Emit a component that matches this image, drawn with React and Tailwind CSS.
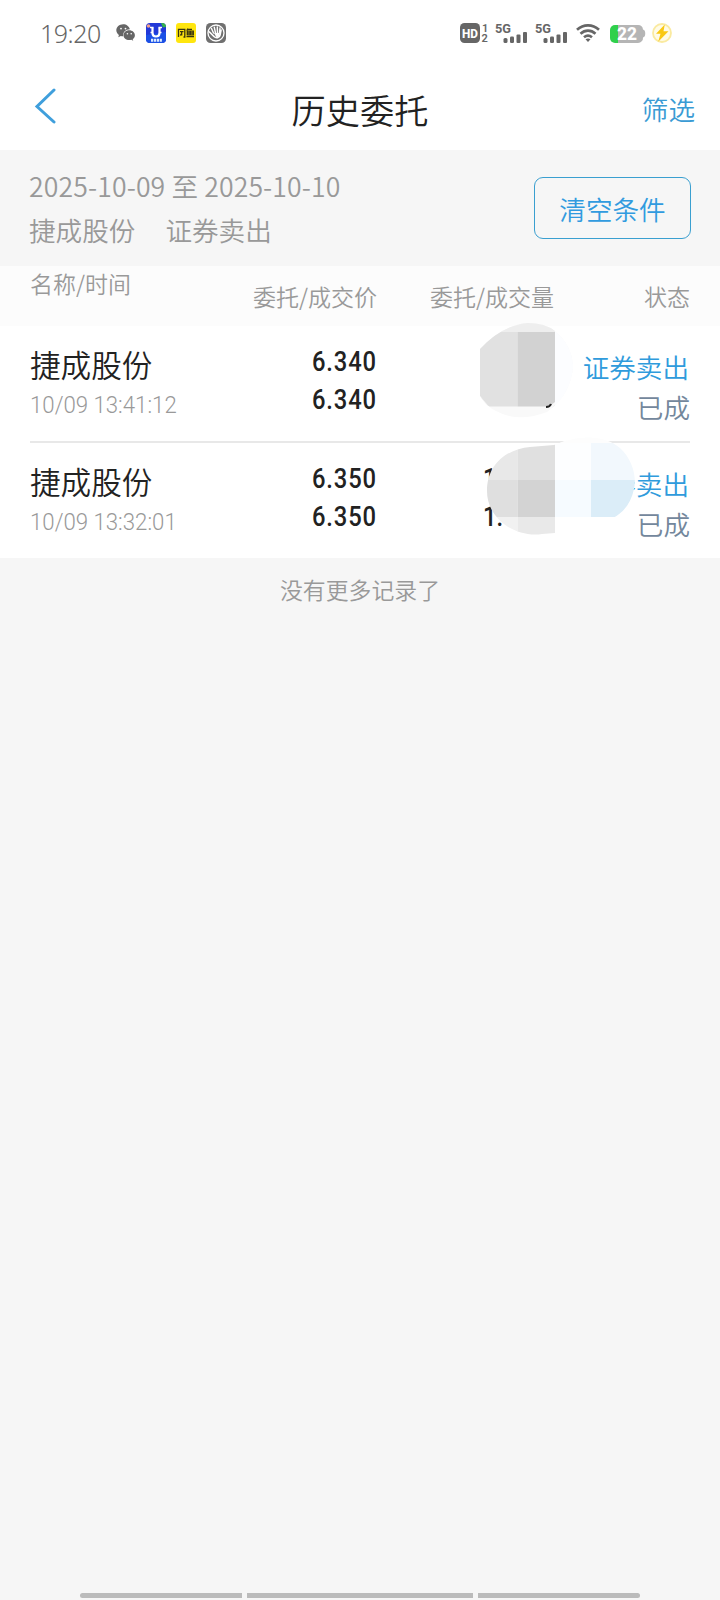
const orders = [
    { name: '捷成股份', time: '10/09 13:41:12', price: '6.340', deal: '6.340', qty: ['', ''], side: '证券卖出', state: '已成' },
    { name: '捷成股份', time: '10/09 13:32:01', price: '6.350', deal: '6.350', qty: ['1', '1.'], side: '证券卖出', state: '已成' },
]

function Signal() {
    return (
        <svg className="mr-2 h-5 w-8 overflow-visible" viewBox="0 0 32 20">
            <text x="-1" y="9.500" fontSize="12.500" fontWeight="700" fontFamily="Roboto, sans-serif" fill="#666" textLength="16" lengthAdjust="spacingAndGlyphs">5G</text>
            <g fill="#666">
                <rect x="7.500" y="15" width="4" height="5" rx="1.500" />
                <rect x="14" y="13.500" width="4" height="6.500" rx="1.200" />
                <rect x="20.500" y="11.500" width="4" height="8.500" rx="1" />
                <rect x="27" y="9" width="4" height="11" rx="1" />
            </g>
        </svg>
    )
}

function StatusBar() {
    return (
        <div className="flex h-[66px] items-center justify-between pl-10 pr-12">
            <div className="flex items-center gap-[10px]">
                <span className="w-[66px] pb-px font-['Noto_Sans',sans-serif] text-[25px] leading-6 tracking-[-0.5px] text-[#666]">19:20</span>
                <svg className="h-5 w-5" viewBox="0 0 20 20">
                    <path d="M7.2 1.2C3.2 1.2.3 4 .3 7.3c0 1.9 1 3.500 2.600 4.600l-.6 2.300 2.500-1.300c.8.3 1.600.4 2.400.4C6.700 9.500 9.500 6.300 13.900 6.300 13.200 3.300 10.500 1.200 7.200 1.200z" fill="#666" />
                    <path d="M13.2 7.300c-3.200 0-5.700 2.200-5.700 4.900s2.500 4.900 5.700 4.900c.7 0 1.400-.1 2.100-.3l1.900 1-.5-1.700c1.400-.9 2.200-2.300 2.200-3.900 0-2.700-2.500-4.900-5.700-4.900z" fill="#666" />
                    <g fill="#fff">
                        <circle cx="5" cy="5.600" r=".9" />
                        <circle cx="9.500" cy="5.600" r=".9" />
                        <circle cx="11.400" cy="10.800" r=".8" />
                        <circle cx="15.200" cy="10.800" r=".8" />
                    </g>
                </svg>
                <svg className="h-5 w-5" viewBox="0 0 20 20">
                    <rect width="20" height="20" rx="4" fill="#2238d8" />
                    <path d="M0 12l20-3v7a4 4 0 0 1-4 4H4a4 4 0 0 1-4-4z" fill="#1b50e6" />
                    <path d="M15 0h1a4 4 0 0 1 4 4l-3 .5z" fill="#35b44a" />
                    <circle cx="2.500" cy="3" r="1.800" fill="#f0a08c" />
                    <path d="M4 4.500h3.500M16 4.500h-3.500" fill="none" stroke="#fff" strokeWidth="1.600" />
                    <path d="M6.500 4.500v5.500q0 3.500 3.500 3.500t3.500-3.500V4.500" fill="none" stroke="#fff" strokeWidth="2.200" />
                    <path d="M4.500 9.500h2M13.500 9.500h2" stroke="#fff" strokeWidth="1.600" />
                    <path d="M5 17.300h11" stroke="#dcecff" strokeWidth="3" strokeDasharray="2.200 .7" />
                </svg>
                <svg className="h-5 w-5" viewBox="0 0 20 20">
                    <rect width="20" height="20" rx="3" fill="#ffe60f" />
                    <g fill="none" stroke="#39350f" strokeWidth="1.300">
                        <path d="M2.500 14V6.300h6.300V14H7.500M4 8.600h3.500M5.700 8.600v4M4.200 12.500l1.400-2" />
                        <path d="M12 5.500l-1.200 2M11.500 6.300h4.500M11.300 8.200h6v3.600h-6zM14.300 8.200v3.600M11.300 10h6M10.500 13.600h7.500" />
                    </g>
                </svg>
                <svg className="h-5 w-5" viewBox="0 0 20 20">
                    <rect width="20" height="20" rx="4.500" fill="#707070" />
                    <circle cx="10" cy="10" r="8" fill="none" stroke="#fff" strokeWidth="1.300" />
                    <path d="M3.500 9l4.500 4.500c2 2 5.500 1.500 6-1.500l1-5" fill="none" stroke="#fff" strokeWidth="1.700" strokeLinecap="round" />
                    <path d="M7.500 10L5.500 5.500M9.500 10L8.300 4.300M11.500 10l-.2-6M13.500 10l.5-5" stroke="#fff" strokeWidth="1.400" strokeLinecap="round" />
                    <path d="M8 10h5.500v3l-3 1.500z" fill="#fff" />
                </svg>
            </div>
            <div className="flex items-center">
                <svg className="mr-[6px] h-5 w-[30px] overflow-visible" viewBox="0 0 30 20">
                    <rect width="20" height="20" rx="4.500" fill="#666" />
                    <text x="2" y="14.800" fontSize="13" fontWeight="800" fontFamily="Roboto, sans-serif" fill="#fff" textLength="16" lengthAdjust="spacingAndGlyphs">HD</text>
                    <g fill="#666" fontFamily="Roboto, sans-serif" fontWeight="600">
                        <text x="22" y="9" fontSize="11">1</text>
                        <text x="21.500" y="19" fontSize="11">2</text>
                    </g>
                </svg>
                <Signal />
                <Signal />
                <svg className="mr-[10px] h-5 w-6" viewBox="0 0 24 20">
                    <g fill="none" stroke="#666" strokeWidth="2.700">
                        <path d="M1 6.800C7.500.8 16.500.8 23 6.800" />
                        <path d="M4.500 10.700c4.500-4 10.500-4 15 0" />
                        <path d="M8 14.300c2.500-2 5.500-2 8 0" />
                    </g>
                    <path d="M9.500 16.300c1.500-1.200 3.500-1.200 5 0L12 19z" fill="#666" />
                </svg>
                <svg className="mr-[6px] h-5 w-9 overflow-visible" viewBox="0 0 36 20">
                    <path d="M6 2h22a5 5 0 0 1 5 4.500c3 .3 3 7.700 0 8A5 5 0 0 1 28 20H6z" fill="#b5b5b5" />
                    <path d="M8 2H5a5 5 0 0 0-5 5v8a5 5 0 0 0 5 5h3z" fill="#2fd04c" />
                    <text x="7" y="17.300" fontSize="17.500" fontWeight="800" fontFamily="Roboto, sans-serif" fill="#fff" textLength="20" lengthAdjust="spacingAndGlyphs">22</text>
                </svg>
                <svg className="h-5 w-5" viewBox="0 0 20 20">
                    <circle cx="10" cy="10" r="9" fill="#fffbe6" stroke="#faeaa0" strokeWidth="1.800" />
                    <path d="M12.800 1.500L4 10.800h4.500L6.200 18.800 16.500 8.300h-5z" fill="#f9c814" />
                </svg>
            </div>
        </div>
    )
}

function OrderRow({ order }) {
    return (
        <div className="flex h-[115px] text-[#222]">
            <div className="w-[200px] pt-4">
                <p className="text-[30.600px] leading-[44px]">{order.name}</p>
                <p className="origin-left scale-x-[0.925] whitespace-nowrap font-['Roboto',sans-serif] text-[24px] leading-[38px] text-[#999]">{order.time}</p>
            </div>
            <div className="w-[147px] pt-[17px] text-right font-['Roboto',sans-serif] text-[27px] font-medium leading-[38px]">
                <p className="origin-right scale-x-[0.88] tracking-[1px]">{order.price}</p>
                <p className="origin-right scale-x-[0.88] tracking-[1px]">{order.deal}</p>
            </div>
            <div className="w-[176px] pl-[106px] pt-[17px] font-['Roboto',sans-serif] text-[27px] font-medium leading-[38px]">
                <p className="h-[38px] origin-left scale-x-[0.88]">{order.qty[0]}</p>
                <p className="h-[38px] origin-left scale-x-[0.88]">{order.qty[1]}</p>
            </div>
            <div className="flex-1 whitespace-nowrap pt-[21px] text-right text-[26.600px] leading-10">
                <p className="pr-px text-[#2f9bdc]">{order.side}</p>
                <p className="text-[#73879c]">{order.state}</p>
            </div>
        </div>
    )
}

// pixelated smudges that hide the quantities
function Mosaic() {
    return (
        <svg className="absolute left-[470px] top-[-6px] h-[220px] w-[180px]" viewBox="470 320 180 220">
            <defs>
                <clipPath id="top-blob">
                    <path d="M480 349Q502 325 528 323Q545 323 555 331Q573 346 573 368Q570 396 547 412Q518 423 496 411Q487 407 480 396Z" />
                </clipPath>
                <clipPath id="bottom-blob">
                    <path d="M487 491C487 464 507 449 530 447L554 445L565 441C590 434 608 438 620 448C632 459 637 476 634 489C631 503 624 512 613 518L555 519V533L542 534C517 538 487 520 487 491Z" />
                </clipPath>
            </defs>
            <g clipPath="url(#top-blob)">
                <rect x="470" y="320" width="110" height="110" fill="#f9f9f9" />
                <rect x="470" y="320" width="85" height="12" fill="#eee" />
                <rect x="555" y="320" width="25" height="110" fill="#fcfdff" />
                <rect x="480" y="332" width="37.500" height="74.500" fill="#e1e1e1" />
                <rect x="517.500" y="332" width="37.500" height="74.500" fill="#d2d2d2" />
                <path d="M480 396v12h10zM555 402v6h-8z" fill="#f9f9f9" />
            </g>
            <path d="M546 407q4 0 5-3" fill="none" stroke="#222" strokeWidth="2" />
            <g clipPath="url(#bottom-blob)">
                <rect x="480" y="430" width="37.500" height="50" fill="#e8e8e8" />
                <rect x="517.500" y="430" width="37.500" height="50" fill="#e0e0e0" />
                <rect x="555" y="430" width="36" height="50" fill="#fdfeff" />
                <rect x="591" y="443" width="50" height="37" fill="#f2f8fd" />
                <rect x="555" y="430" width="85" height="13" fill="#fdfdfd" />
                <rect x="480" y="480" width="37.500" height="37" fill="#dfdfdf" />
                <rect x="517.500" y="480" width="37.500" height="37" fill="#d3d3d3" />
                <rect x="555" y="480" width="36" height="37" fill="#f6fbff" />
                <rect x="591" y="480" width="50" height="37" fill="#dbedf8" />
                <rect x="480" y="517" width="37.500" height="23" fill="#f1f1f1" />
                <rect x="517.500" y="517" width="37.500" height="23" fill="#e9e9e9" />
            </g>
        </svg>
    )
}

export default function App() {
    return (
        <div className="flex h-[1600px] w-[720px] flex-col overflow-hidden bg-[#f6f6f6] font-['Noto_Sans_CJK_SC',sans-serif] font-[350]">
            <div className="h-[150px] bg-white">
                <StatusBar />
                <div className="grid h-[84px] grid-cols-3 items-center pl-[34px] pr-[25px]">
                    <svg className="mb-[5px] h-9 w-6" viewBox="0 0 24 36">
                        <path d="M20 2L3 18.500L20 34" fill="none" stroke="#3f9fdc" strokeWidth="3" strokeLinecap="round" />
                    </svg>
                    <h1 className="-ml-[9px] pt-[3px] text-center text-[34.200px] font-[350] text-[#222]">历史委托</h1>
                    <span className="pt-0.5 text-right text-[26.600px] text-[#3a9bd4]">筛选</span>
                </div>
            </div>

            <div className="flex h-[116px] items-start justify-between pl-[29px] pr-[29px]">
                <div className="pt-[14px] text-[26.600px] leading-[44px] text-[#999]">
                    <p className="tracking-[0.13px]">2025-10-09 至 2025-10-10</p>
                    <p className="flex gap-[30px]"><span>捷成股份</span><span>证券卖出</span></p>
                </div>
                <button className="mt-[27px] h-[62px] w-[157px] rounded-[9px] border border-[#3a9fd0] pt-0.5 text-[26.600px] text-[#319bdf]">清空条件</button>
            </div>

            <div className="flex h-[60px] bg-[#fcfcfc] px-[30px] text-[23px] leading-[34px] text-[#999]">
                <span className="w-[200px]">名称/时间</span>
                <span className="w-[147px] pt-[13px] text-right">委托/成交价</span>
                <span className="w-[177px] pt-[13px] text-right">委托/成交量</span>
                <span className="flex-1 pt-[13px] text-right">状态</span>
            </div>

            <div className="relative h-[232px] bg-white px-[30px]">
                <OrderRow order={orders[0]} />
                <div className="h-[2px] bg-[#e8e8e8]" />
                <OrderRow order={orders[1]} />
                <Mosaic />
            </div>

            <p className="flex-1 pt-[14px] text-center text-[22.900px] leading-[34px] text-[#999]">没有更多记录了</p>

            <div className="mb-[2px] flex h-[5px] justify-center gap-[5px]">
                <div className="w-[162px] rounded-l-full bg-[#bbb]" />
                <div className="w-[226px] bg-[#bbb]" />
                <div className="w-[162px] rounded-r-full bg-[#bbb]" />
            </div>
        </div>
    )
}
